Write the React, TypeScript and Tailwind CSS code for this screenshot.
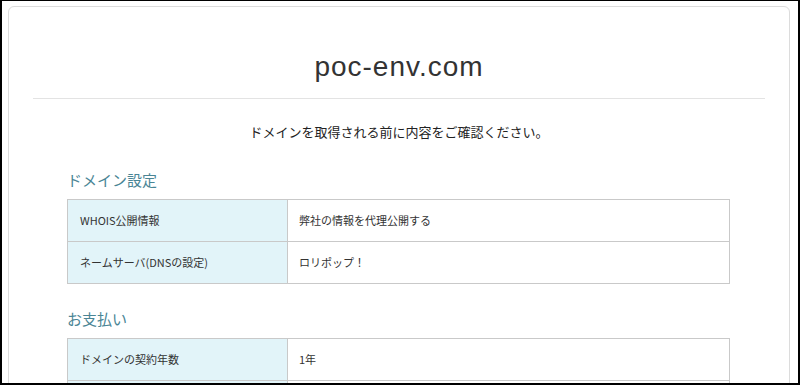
const jp = { fontFamily: '"Noto Sans CJK JP", "Liberation Sans", sans-serif' };

interface Row {
  label: string;
  value: string;
}

const domainRows: Row[] = [
  { label: 'WHOIS公開情報', value: '弊社の情報を代理公開する' },
  { label: 'ネームサーバ(DNSの設定)', value: 'ロリポップ！' },
];

const paymentRows: Row[] = [
  { label: 'ドメインの契約年数', value: '1年' },
  { label: '', value: '' },
];

function Section({ title, rows }: { title: string; rows: Row[] }) {
  return (
    <div>
      <h2 className="text-[15px] leading-[24px] text-[#4a8595]" style={jp}>
        {title}
      </h2>
      <table className="mt-[7px] w-full border-collapse text-[11px] text-[#333]" style={jp}>
        <tbody>
          {rows.map((row, i) => (
            <tr key={i} className="h-[42px]">
              <td className="w-[220px] border border-[#c9c9c9] bg-[#e2f4f9] pl-[12px] align-middle">
                {row.label}
              </td>
              <td className="border border-[#c9c9c9] bg-white pl-[11px] align-middle">{row.value}</td>
            </tr>
          ))}
        </tbody>
      </table>
    </div>
  );
}

export default function App() {
  return (
    <div className="h-[385px] w-[800px] overflow-hidden border-t border-l-2 border-r-2 border-b-2 border-black bg-white pt-[5px] pl-[6px] pr-[8px]">
      <div className="h-[420px] rounded-[6px] border border-[#dcdcdc] bg-white px-6">
        <h1
          className="pt-[44px] pb-[15px] text-center text-[28px] leading-[32px] tracking-[1px] text-[#333]"
          style={{ fontFamily: '"Liberation Sans", Arial, sans-serif' }}
        >
          poc-env.com
        </h1>
        <div className="h-px bg-[#e3e3e3]" />
        <p className="mt-[23px] text-center text-[13px] leading-[20px] text-[#222]" style={jp}>
          ドメインを取得される前に内容をご確認ください。
        </p>
        <div className="ml-[34px] mr-[35px] mt-[26px] flex flex-col gap-[23px]">
          <Section title="ドメイン設定" rows={domainRows} />
          <Section title="お支払い" rows={paymentRows} />
        </div>
      </div>
    </div>
  );
}
